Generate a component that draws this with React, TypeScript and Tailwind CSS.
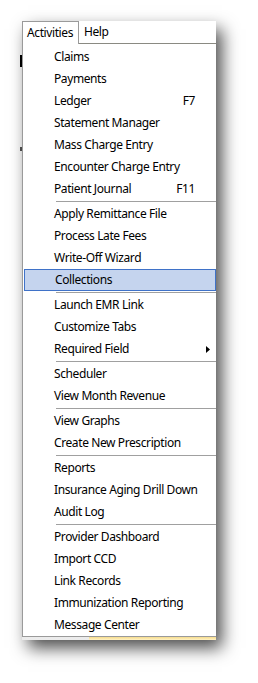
import { Fragment } from 'react';

type Entry = { label: string; shortcut?: string; submenu?: boolean; active?: boolean };

// groups are split by separators
const groups: Entry[][] = [
    [
        { label: 'Claims' },
        { label: 'Payments' },
        { label: 'Ledger', shortcut: 'F7' },
        { label: 'Statement Manager' },
        { label: 'Mass Charge Entry' },
        { label: 'Encounter Charge Entry' },
        { label: 'Patient Journal', shortcut: 'F11' },
    ],
    [
        { label: 'Apply Remittance File' },
        { label: 'Process Late Fees' },
        { label: 'Write-Off Wizard' },
        { label: 'Collections', active: true },
    ],
    [
        { label: 'Launch EMR Link' },
        { label: 'Customize Tabs' },
        { label: 'Required Field', submenu: true },
    ],
    [{ label: 'Scheduler' }, { label: 'View Month Revenue' }],
    [{ label: 'View Graphs' }, { label: 'Create New Prescription' }],
    [{ label: 'Reports' }, { label: 'Insurance Aging Drill Down' }, { label: 'Audit Log' }],
    [
        { label: 'Provider Dashboard' },
        { label: 'Import CCD' },
        { label: 'Link Records' },
        { label: 'Immunization Reporting' },
        { label: 'Message Center' },
    ],
];

function MenuItem({ item }: { item: Entry }) {
    return (
        <div
            className={
                item.active
                    ? 'ml-[1px] h-[22px] flex items-center pl-[30px] pr-[20px] bg-[#c5d4ee] border border-[#3f72c8]'
                    : 'h-[22px] flex items-center pl-[31px] pr-[21px]'
            }
        >
            <span className="flex-1 whitespace-nowrap">{item.label}</span>
            {item.shortcut && <span className="whitespace-nowrap">{item.shortcut}</span>}
            {item.submenu && (
                <svg width="4" height="7" viewBox="0 0 4 7" className="mr-[-15px]">
                    <path d="M0 0 L4 3.5 L0 7 Z" fill="#000" />
                </svg>
            )}
        </div>
    );
}

export default function App() {
    return (
        <div
            className="w-[258px] h-[683px] bg-white overflow-hidden text-[12px] tracking-[-0.4px] text-black"
            style={{ fontFamily: '"Noto Sans", "Liberation Sans", sans-serif' }}
        >
            <div className="flex pt-[21px]">
                {/* bits of the window behind the menu */}
                <div className="w-[22px] flex flex-col items-end">
                    <div className="mt-[34px] w-[2px] h-[12px] bg-black" />
                    <div className="mt-[80px] w-[2px] h-[4px] bg-[#555]" />
                </div>

                <div className="w-[194px] shadow-[6px_8px_16px_rgba(0,0,0,0.7)]">
                    {/* menu bar */}
                    <div className="flex h-[23px] bg-white">
                        <div className="w-[57px] border-l border-t border-r border-[#9a9a9a] flex items-center pl-[4px] leading-none">
                            Activities
                        </div>
                        <div className="flex-1 flex items-center pl-[5px] border-b border-[#8a8a82] leading-none">Help</div>
                    </div>

                    {/* dropdown */}
                    <div className="bg-white border-l border-b border-[#9a9a9a] pt-[2px]">
                        {groups.map((group, gi) => (
                            <Fragment key={gi}>
                                {gi > 0 && (
                                    <div className="h-[3px] flex items-center pl-[33px]">
                                        <div className="h-px flex-1 bg-[#a0a0a0]" />
                                    </div>
                                )}
                                {group.map((item) => (
                                    <MenuItem key={item.label} item={item} />
                                ))}
                            </Fragment>
                        ))}
                    </div>
                    <div className="flex h-[3px]">
                        <div className="w-[67px] bg-[#ececec]" />
                        <div className="flex-1 bg-gradient-to-b from-[#f6dc8c] to-[#fff1c4]" />
                    </div>
                </div>
            </div>
        </div>
    );
}
